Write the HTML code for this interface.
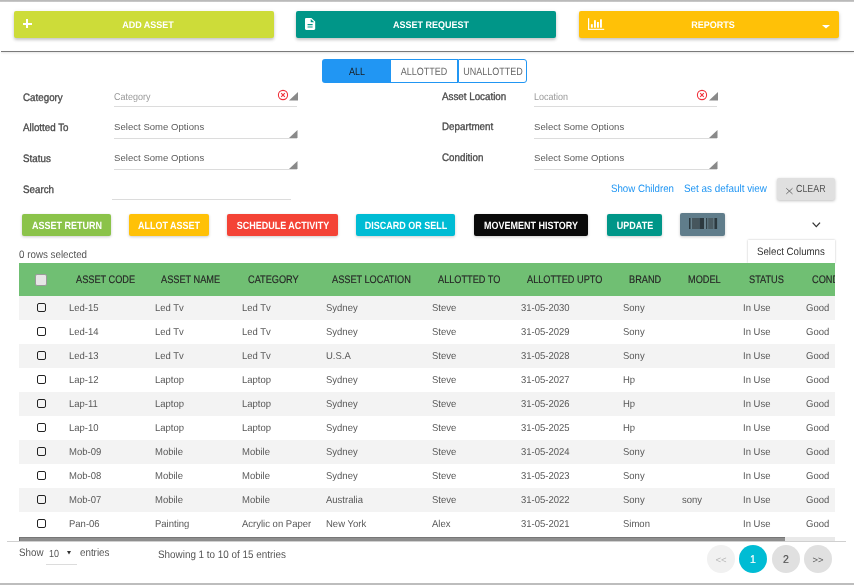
<!DOCTYPE html><html><head><meta charset="utf-8"><style>
*{margin:0;padding:0;box-sizing:border-box}
html,body{width:854px;height:585px;overflow:hidden;background:#fff;position:relative}
body{font-family:"Liberation Sans",sans-serif}
.t{position:absolute;white-space:nowrap;text-rendering:geometricPrecision;will-change:transform}
.r{position:absolute}
svg{position:absolute;overflow:visible}
</style></head><body>
<div class="r" style="left:0px;top:0px;width:854px;height:2px;background:linear-gradient(#bababa 0,#bababa 1.3px,#e6e6e6 2px);"></div>
<div class="r" style="left:14px;top:11px;width:260px;height:27px;background:#cddc39;border-radius:2px;box-shadow:0 2px 3px rgba(0,0,0,0.18),0 1px 5px rgba(0,0,0,0.08)"></div>
<div class="r" style="left:296px;top:11px;width:260px;height:27px;background:#009688;border-radius:2px;box-shadow:0 2px 3px rgba(0,0,0,0.18),0 1px 5px rgba(0,0,0,0.08)"></div>
<div class="r" style="left:579px;top:11px;width:260px;height:27px;background:#ffc107;border-radius:2px;box-shadow:0 2px 3px rgba(0,0,0,0.18),0 1px 5px rgba(0,0,0,0.08)"></div>
<div class="t" style="left:-52.40px;width:400px;text-align:center;top:20.58px;font-size:9px;line-height:9px;color:#fff;font-weight:700;transform:scaleY(1.07);transform-origin:0 7.62px;">ADD ASSET</div>
<div class="t" style="left:230.90px;width:400px;text-align:center;top:20.58px;font-size:9px;line-height:9px;color:#fff;font-weight:700;transform:scaleY(1.07);transform-origin:0 7.62px;">ASSET REQUEST</div>
<div class="t" style="left:513.00px;width:400px;text-align:center;top:20.58px;font-size:9px;line-height:9px;color:#fff;font-weight:700;transform:scaleY(1.07);transform-origin:0 7.62px;">REPORTS</div>
<div class="r" style="left:22.5px;top:22.8px;width:9.3px;height:2px;background:#fff;"></div>
<div class="r" style="left:26px;top:19.3px;width:2px;height:8.7px;background:#fff;"></div>
<svg style="left:305px;top:17.9px" width="10.2" height="12" viewBox="4 2 16 20" preserveAspectRatio="none"><path d="M14 2H6c-1.1 0-1.99.9-1.99 2L4 20c0 1.1.89 2 1.99 2H18c1.1 0 2-.9 2-2V8l-6-6zm2 16H8v-2h8v2zm0-4H8v-2h8v2zm-3-5V3.5L18.5 9H13z" fill="#fff" transform="translate(12 12) scale(1) translate(-12 -12)"/></svg>
<svg style="left:588px;top:18px" width="17" height="13" viewBox="0 0 17 13"><rect x="0" y="0.2" width="1.2" height="11.6" fill="#fff"/><rect x="0" y="10.8" width="16.2" height="1.1" fill="#fff"/><rect x="2.9" y="6.2" width="1.9" height="3.5" fill="#fff"/><rect x="6" y="2.2" width="1.9" height="7.5" fill="#fff"/><rect x="9" y="4" width="1.9" height="5.7" fill="#fff"/><rect x="12" y="1.3" width="1.9" height="8.4" fill="#fff"/></svg>
<svg style="left:822px;top:24.8px" width="8" height="4" viewBox="0 0 8 4"><path d="M0 0H8L4 3.6z" fill="#fff"/></svg>
<div class="r" style="left:1px;top:51px;width:853px;height:1px;background:#7a7a7a;box-shadow:0 1px 2px rgba(0,0,0,0.15)"></div>
<div class="r" style="left:322px;top:59px;width:69px;height:24px;background:#2196f3;border-radius:3px 0 0 3px"></div>
<div class="r" style="left:391px;top:59px;width:67px;height:24px;background:#fff;border:1px solid #2196f3;border-left:none"></div>
<div class="r" style="left:458px;top:59px;width:69px;height:24px;background:#fff;border:1px solid #2196f3;border-radius:0 3px 3px 0"></div>
<div class="t" style="left:157.00px;width:400px;text-align:center;top:68.18px;font-size:9px;line-height:9px;color:#1a1a1a;font-weight:400;transform:scaleY(1.18);transform-origin:0 7.62px;">ALL</div>
<div class="t" style="left:224.30px;width:400px;text-align:center;top:68.18px;font-size:9px;line-height:9px;color:#666;font-weight:400;transform:scaleY(1.18);transform-origin:0 7.62px;">ALLOTTED</div>
<div class="t" style="left:292.60px;width:400px;text-align:center;top:68.18px;font-size:9px;line-height:9px;color:#666;font-weight:400;transform:scaleY(1.18);transform-origin:0 7.62px;">UNALLOTTED</div>
<div class="t" style="left:22.50px;top:93.50px;font-size:9.8px;line-height:9.8px;color:#4a4a4a;font-weight:400;transform:scaleY(1.1);transform-origin:0 8.30px;-webkit-text-stroke:0.3px #4a4a4a">Category</div>
<div class="t" style="left:22.50px;top:123.50px;font-size:9.8px;line-height:9.8px;color:#4a4a4a;font-weight:400;transform:scaleY(1.1);transform-origin:0 8.30px;-webkit-text-stroke:0.3px #4a4a4a">Allotted To</div>
<div class="t" style="left:22.50px;top:154.60px;font-size:9.8px;line-height:9.8px;color:#4a4a4a;font-weight:400;transform:scaleY(1.1);transform-origin:0 8.30px;-webkit-text-stroke:0.3px #4a4a4a">Status</div>
<div class="t" style="left:22.50px;top:186.30px;font-size:9.8px;line-height:9.8px;color:#4a4a4a;font-weight:400;transform:scaleY(1.1);transform-origin:0 8.30px;-webkit-text-stroke:0.3px #4a4a4a">Search</div>
<div class="t" style="left:442.00px;top:92.90px;font-size:9.8px;line-height:9.8px;color:#4a4a4a;font-weight:400;transform:scaleY(1.1);transform-origin:0 8.30px;-webkit-text-stroke:0.3px #4a4a4a">Asset Location</div>
<div class="t" style="left:442.00px;top:122.90px;font-size:9.8px;line-height:9.8px;color:#4a4a4a;font-weight:400;transform:scaleY(1.1);transform-origin:0 8.30px;-webkit-text-stroke:0.3px #4a4a4a">Department</div>
<div class="t" style="left:442.00px;top:154.00px;font-size:9.8px;line-height:9.8px;color:#4a4a4a;font-weight:400;transform:scaleY(1.1);transform-origin:0 8.30px;-webkit-text-stroke:0.3px #4a4a4a">Condition</div>
<div class="r" style="left:114px;top:106px;width:183px;height:1px;background:#dcdcdc;"></div>
<div class="r" style="left:114px;top:138px;width:183px;height:1px;background:#dcdcdc;"></div>
<div class="r" style="left:114px;top:169px;width:183px;height:1px;background:#dcdcdc;"></div>
<svg style="left:277.3px;top:88.5px" width="12" height="12" viewBox="0 0 12 12"><circle cx="6" cy="6" r="4.6" fill="none" stroke="#f0303a" stroke-width="1.1"/><path d="M4.2 4.2L7.8 7.8M7.8 4.2L4.2 7.8" stroke="#f0303a" stroke-width="1.1"/></svg>
<svg style="left:289.3px;top:92.2px" width="9" height="8.5" viewBox="0 0 9 8.5"><path d="M9 0V8.5H0z" fill="#8a8a8a"/></svg>
<svg style="left:289.3px;top:130.4px" width="8.5" height="8" viewBox="0 0 8.5 8"><path d="M8.5 0V8H0z" fill="#8a8a8a"/></svg>
<svg style="left:289.3px;top:161.3px" width="8.5" height="8" viewBox="0 0 8.5 8"><path d="M8.5 0V8H0z" fill="#8a8a8a"/></svg>
<div class="r" style="left:533.5px;top:106px;width:183px;height:1px;background:#dcdcdc;"></div>
<div class="r" style="left:533.5px;top:138px;width:183px;height:1px;background:#dcdcdc;"></div>
<div class="r" style="left:533.5px;top:169px;width:183px;height:1px;background:#dcdcdc;"></div>
<svg style="left:696.3px;top:88.5px" width="12" height="12" viewBox="0 0 12 12"><circle cx="6" cy="6" r="4.6" fill="none" stroke="#f0303a" stroke-width="1.1"/><path d="M4.2 4.2L7.8 7.8M7.8 4.2L4.2 7.8" stroke="#f0303a" stroke-width="1.1"/></svg>
<svg style="left:708.5px;top:92.2px" width="9" height="8.5" viewBox="0 0 9 8.5"><path d="M9 0V8.5H0z" fill="#8a8a8a"/></svg>
<svg style="left:708.5px;top:130.4px" width="8.5" height="8" viewBox="0 0 8.5 8"><path d="M8.5 0V8H0z" fill="#8a8a8a"/></svg>
<svg style="left:708.5px;top:161.3px" width="8.5" height="8" viewBox="0 0 8.5 8"><path d="M8.5 0V8H0z" fill="#8a8a8a"/></svg>
<div class="t" style="left:114.20px;top:93.38px;font-size:9px;line-height:9px;color:#9a9a9a;font-weight:400;transform:scaleY(1.1);transform-origin:0 7.62px;">Category</div>
<div class="t" style="left:533.70px;top:93.38px;font-size:9px;line-height:9px;color:#9a9a9a;font-weight:400;transform:scaleY(1.1);transform-origin:0 7.62px;">Location</div>
<div class="t" style="left:114.40px;top:122.36px;font-size:9.5px;line-height:9.5px;color:#5a5a5a;font-weight:400;letter-spacing:0.05px;text-rendering:auto">Select Some Options</div>
<div class="t" style="left:114.40px;top:153.16px;font-size:9.5px;line-height:9.5px;color:#5a5a5a;font-weight:400;letter-spacing:0.05px;text-rendering:auto">Select Some Options</div>
<div class="t" style="left:533.50px;top:122.36px;font-size:9.5px;line-height:9.5px;color:#5a5a5a;font-weight:400;letter-spacing:0.05px;text-rendering:auto">Select Some Options</div>
<div class="t" style="left:533.50px;top:153.16px;font-size:9.5px;line-height:9.5px;color:#5a5a5a;font-weight:400;letter-spacing:0.05px;text-rendering:auto">Select Some Options</div>
<div class="r" style="left:111.5px;top:199px;width:179px;height:1px;background:#dcdcdc;"></div>
<div class="t" style="left:611.00px;top:185.09px;font-size:9.7px;line-height:9.7px;color:#2196f3;font-weight:400;transform:scaleY(1.1);transform-origin:0 8.21px;">Show Children</div>
<div class="t" style="left:684.00px;top:184.92px;font-size:9.9px;line-height:9.9px;color:#2196f3;font-weight:400;transform:scaleY(1.1);transform-origin:0 8.38px;">Set as default view</div>
<div class="r" style="left:777px;top:178px;width:58px;height:22px;background:#e0e0e0;border-radius:2px;box-shadow:0 1px 3px rgba(0,0,0,0.25)"></div>
<svg style="left:785.6px;top:187.8px" width="7" height="6.2" viewBox="0 0 7 6.2"><path d="M0.3 0.3L6.5 5.9M6.5 0.3L0.3 5.9" stroke="#666" stroke-width="0.9"/></svg>
<div class="t" style="left:796.00px;top:184.97px;font-size:8.9px;line-height:8.9px;color:#555;font-weight:400;transform:scaleY(1.15);transform-origin:0 7.53px;">CLEAR</div>
<div class="r" style="left:22px;top:214px;width:89px;height:22px;background:#8bc34a;border-radius:2px;box-shadow:0 1px 3px rgba(0,0,0,0.2)"></div>
<div class="t" style="left:-133.50px;width:400px;text-align:center;top:221.88px;font-size:9px;line-height:9px;color:#fff;font-weight:700;transform:scaleY(1.17);transform-origin:0 7.62px;">ASSET RETURN</div>
<div class="r" style="left:129px;top:214px;width:80px;height:22px;background:#ffc107;border-radius:2px;box-shadow:0 1px 3px rgba(0,0,0,0.2)"></div>
<div class="t" style="left:-31.00px;width:400px;text-align:center;top:221.88px;font-size:9px;line-height:9px;color:#fff;font-weight:700;transform:scaleY(1.17);transform-origin:0 7.62px;">ALLOT ASSET</div>
<div class="r" style="left:227px;top:214px;width:111px;height:22px;background:#f44336;border-radius:2px;box-shadow:0 1px 3px rgba(0,0,0,0.2)"></div>
<div class="t" style="left:82.50px;width:400px;text-align:center;top:221.88px;font-size:9px;line-height:9px;color:#fff;font-weight:700;transform:scaleY(1.17);transform-origin:0 7.62px;">SCHEDULE ACTIVITY</div>
<div class="r" style="left:356px;top:214px;width:99px;height:22px;background:#00bcd4;border-radius:2px;box-shadow:0 1px 3px rgba(0,0,0,0.2)"></div>
<div class="t" style="left:205.50px;width:400px;text-align:center;top:221.88px;font-size:9px;line-height:9px;color:#fff;font-weight:700;transform:scaleY(1.17);transform-origin:0 7.62px;">DISCARD OR SELL</div>
<div class="r" style="left:474px;top:214px;width:114px;height:22px;background:#0a0a0a;border-radius:2px;box-shadow:0 1px 3px rgba(0,0,0,0.2)"></div>
<div class="t" style="left:331.00px;width:400px;text-align:center;top:221.88px;font-size:9px;line-height:9px;color:#fff;font-weight:700;transform:scaleY(1.17);transform-origin:0 7.62px;">MOVEMENT HISTORY</div>
<div class="r" style="left:607px;top:214px;width:55px;height:22px;background:#009688;border-radius:2px;box-shadow:0 1px 3px rgba(0,0,0,0.2)"></div>
<div class="t" style="left:434.50px;width:400px;text-align:center;top:221.88px;font-size:9px;line-height:9px;color:#fff;font-weight:700;transform:scaleY(1.17);transform-origin:0 7.62px;">UPDATE</div>
<div class="r" style="left:680px;top:213px;width:45px;height:23px;background:#607d8b;border-radius:2px;box-shadow:0 1px 3px rgba(0,0,0,0.2)"></div>
<svg style="left:689px;top:218px" width="28" height="11" viewBox="0 0 28 11"><rect x="0" y="0" width="1.70" height="11" fill="#2a373d"/><rect x="1.7" y="0" width="1.30" height="11" fill="#6a848f"/><rect x="3" y="0" width="7.70" height="11" fill="#46565d"/><rect x="10.7" y="0" width="4.30" height="11" fill="#2c393f"/><rect x="15" y="0" width="2.10" height="11" fill="#6a848f"/><rect x="17.1" y="0" width="1.40" height="11" fill="#2f3c42"/><rect x="18.5" y="0" width="0.70" height="11" fill="#6a848f"/><rect x="19.2" y="0" width="4.90" height="11" fill="#4b5c63"/><rect x="24.1" y="0" width="1.40" height="11" fill="#5f737b"/><rect x="25.5" y="0" width="2.60" height="11" fill="#2c393f"/></svg>
<svg style="left:812px;top:221.5px" width="9" height="6" viewBox="0 0 9 6"><path d="M0.6 0.6L4.3 4.6L8 0.6" fill="none" stroke="#333" stroke-width="1.3"/></svg>
<div class="t" style="left:19.00px;top:251.40px;font-size:9.8px;line-height:9.8px;color:#555;font-weight:400;transform:scaleY(1.1);transform-origin:0 8.30px;">0 rows selected</div>
<div class="r" style="left:748px;top:240px;width:87px;height:23px;background:#fff;box-shadow:0 0 2px rgba(0,0,0,0.25)"></div>
<div class="t" style="left:757.00px;top:248.49px;font-size:9.7px;line-height:9.7px;color:#333;font-weight:400;transform:scaleY(1.1);transform-origin:0 8.21px;">Select Columns</div>
<div class="r" style="left:19px;top:263px;width:816px;height:33px;background:#70bf73;"></div>
<div class="r" style="left:35px;top:274px;width:12px;height:12px;background:#e6e6e6;border:1px solid #9a9a9a;border-radius:2px"></div>
<div class="r" style="left:19px;top:263px;width:816px;height:33px;overflow:hidden"><div class="t" style="left:57px;top:12.61px;font-size:9.2px;line-height:9.2px;color:#262626;-webkit-text-stroke:0.15px #262626;transform:scaleY(1.18);transform-origin:0 7.79px">ASSET CODE</div><div class="t" style="left:142px;top:12.61px;font-size:9.2px;line-height:9.2px;color:#262626;-webkit-text-stroke:0.15px #262626;transform:scaleY(1.18);transform-origin:0 7.79px">ASSET NAME</div><div class="t" style="left:228.6px;top:12.61px;font-size:9.2px;line-height:9.2px;color:#262626;-webkit-text-stroke:0.15px #262626;transform:scaleY(1.18);transform-origin:0 7.79px">CATEGORY</div><div class="t" style="left:312.6px;top:12.61px;font-size:9.2px;line-height:9.2px;color:#262626;-webkit-text-stroke:0.15px #262626;transform:scaleY(1.18);transform-origin:0 7.79px">ASSET LOCATION</div><div class="t" style="left:418.6px;top:12.61px;font-size:9.2px;line-height:9.2px;color:#262626;-webkit-text-stroke:0.15px #262626;transform:scaleY(1.18);transform-origin:0 7.79px">ALLOTTED TO</div><div class="t" style="left:507.79999999999995px;top:12.61px;font-size:9.2px;line-height:9.2px;color:#262626;-webkit-text-stroke:0.15px #262626;transform:scaleY(1.18);transform-origin:0 7.79px">ALLOTTED UPTO</div><div class="t" style="left:609.5px;top:12.61px;font-size:9.2px;line-height:9.2px;color:#262626;-webkit-text-stroke:0.15px #262626;transform:scaleY(1.18);transform-origin:0 7.79px">BRAND</div><div class="t" style="left:669.3px;top:12.61px;font-size:9.2px;line-height:9.2px;color:#262626;-webkit-text-stroke:0.15px #262626;transform:scaleY(1.18);transform-origin:0 7.79px">MODEL</div><div class="t" style="left:729.6px;top:12.61px;font-size:9.2px;line-height:9.2px;color:#262626;-webkit-text-stroke:0.15px #262626;transform:scaleY(1.18);transform-origin:0 7.79px">STATUS</div><div class="t" style="left:792.5px;top:12.61px;font-size:9.2px;line-height:9.2px;color:#262626;-webkit-text-stroke:0.15px #262626;transform:scaleY(1.18);transform-origin:0 7.79px">CONDITION</div></div>
<div class="r" style="left:19px;top:296px;width:816px;height:24px;background:#f3f3f3;"></div>
<div class="r" style="left:36.8px;top:303.2px;width:9.6px;height:9.2px;background:transparent;border:1.4px solid #222;border-radius:2px"></div>
<div class="t" style="left:69.10px;top:303.96px;font-size:9.5px;line-height:9.5px;color:#585858;font-weight:400;transform:scaleY(1.05);transform-origin:0 8.04px;">Led-15</div>
<div class="t" style="left:154.50px;top:303.96px;font-size:9.5px;line-height:9.5px;color:#585858;font-weight:400;transform:scaleY(1.05);transform-origin:0 8.04px;">Led Tv</div>
<div class="t" style="left:241.60px;top:303.96px;font-size:9.5px;line-height:9.5px;color:#585858;font-weight:400;transform:scaleY(1.05);transform-origin:0 8.04px;">Led Tv</div>
<div class="t" style="left:325.60px;top:303.96px;font-size:9.5px;line-height:9.5px;color:#585858;font-weight:400;transform:scaleY(1.05);transform-origin:0 8.04px;">Sydney</div>
<div class="t" style="left:431.80px;top:303.96px;font-size:9.5px;line-height:9.5px;color:#585858;font-weight:400;transform:scaleY(1.05);transform-origin:0 8.04px;">Steve</div>
<div class="t" style="left:520.70px;top:303.96px;font-size:9.5px;line-height:9.5px;color:#585858;font-weight:400;transform:scaleY(1.05);transform-origin:0 8.04px;">31-05-2030</div>
<div class="t" style="left:622.70px;top:303.96px;font-size:9.5px;line-height:9.5px;color:#585858;font-weight:400;transform:scaleY(1.05);transform-origin:0 8.04px;">Sony</div>
<div class="t" style="left:742.50px;top:303.96px;font-size:9.5px;line-height:9.5px;color:#585858;font-weight:400;transform:scaleY(1.05);transform-origin:0 8.04px;">In Use</div>
<div class="t" style="left:806.00px;top:303.96px;font-size:9.5px;line-height:9.5px;color:#585858;font-weight:400;transform:scaleY(1.05);transform-origin:0 8.04px;">Good</div>
<div class="r" style="left:19px;top:320px;width:816px;height:24px;background:#fff;"></div>
<div class="r" style="left:36.8px;top:327.2px;width:9.6px;height:9.2px;background:transparent;border:1.4px solid #222;border-radius:2px"></div>
<div class="t" style="left:69.10px;top:327.96px;font-size:9.5px;line-height:9.5px;color:#585858;font-weight:400;transform:scaleY(1.05);transform-origin:0 8.04px;">Led-14</div>
<div class="t" style="left:154.50px;top:327.96px;font-size:9.5px;line-height:9.5px;color:#585858;font-weight:400;transform:scaleY(1.05);transform-origin:0 8.04px;">Led Tv</div>
<div class="t" style="left:241.60px;top:327.96px;font-size:9.5px;line-height:9.5px;color:#585858;font-weight:400;transform:scaleY(1.05);transform-origin:0 8.04px;">Led Tv</div>
<div class="t" style="left:325.60px;top:327.96px;font-size:9.5px;line-height:9.5px;color:#585858;font-weight:400;transform:scaleY(1.05);transform-origin:0 8.04px;">Sydney</div>
<div class="t" style="left:431.80px;top:327.96px;font-size:9.5px;line-height:9.5px;color:#585858;font-weight:400;transform:scaleY(1.05);transform-origin:0 8.04px;">Steve</div>
<div class="t" style="left:520.70px;top:327.96px;font-size:9.5px;line-height:9.5px;color:#585858;font-weight:400;transform:scaleY(1.05);transform-origin:0 8.04px;">31-05-2029</div>
<div class="t" style="left:622.70px;top:327.96px;font-size:9.5px;line-height:9.5px;color:#585858;font-weight:400;transform:scaleY(1.05);transform-origin:0 8.04px;">Sony</div>
<div class="t" style="left:742.50px;top:327.96px;font-size:9.5px;line-height:9.5px;color:#585858;font-weight:400;transform:scaleY(1.05);transform-origin:0 8.04px;">In Use</div>
<div class="t" style="left:806.00px;top:327.96px;font-size:9.5px;line-height:9.5px;color:#585858;font-weight:400;transform:scaleY(1.05);transform-origin:0 8.04px;">Good</div>
<div class="r" style="left:19px;top:344px;width:816px;height:24px;background:#f3f3f3;"></div>
<div class="r" style="left:36.8px;top:351.2px;width:9.6px;height:9.2px;background:transparent;border:1.4px solid #222;border-radius:2px"></div>
<div class="t" style="left:69.10px;top:351.96px;font-size:9.5px;line-height:9.5px;color:#585858;font-weight:400;transform:scaleY(1.05);transform-origin:0 8.04px;">Led-13</div>
<div class="t" style="left:154.50px;top:351.96px;font-size:9.5px;line-height:9.5px;color:#585858;font-weight:400;transform:scaleY(1.05);transform-origin:0 8.04px;">Led Tv</div>
<div class="t" style="left:241.60px;top:351.96px;font-size:9.5px;line-height:9.5px;color:#585858;font-weight:400;transform:scaleY(1.05);transform-origin:0 8.04px;">Led Tv</div>
<div class="t" style="left:325.60px;top:351.96px;font-size:9.5px;line-height:9.5px;color:#585858;font-weight:400;transform:scaleY(1.05);transform-origin:0 8.04px;">U.S.A</div>
<div class="t" style="left:431.80px;top:351.96px;font-size:9.5px;line-height:9.5px;color:#585858;font-weight:400;transform:scaleY(1.05);transform-origin:0 8.04px;">Steve</div>
<div class="t" style="left:520.70px;top:351.96px;font-size:9.5px;line-height:9.5px;color:#585858;font-weight:400;transform:scaleY(1.05);transform-origin:0 8.04px;">31-05-2028</div>
<div class="t" style="left:622.70px;top:351.96px;font-size:9.5px;line-height:9.5px;color:#585858;font-weight:400;transform:scaleY(1.05);transform-origin:0 8.04px;">Sony</div>
<div class="t" style="left:742.50px;top:351.96px;font-size:9.5px;line-height:9.5px;color:#585858;font-weight:400;transform:scaleY(1.05);transform-origin:0 8.04px;">In Use</div>
<div class="t" style="left:806.00px;top:351.96px;font-size:9.5px;line-height:9.5px;color:#585858;font-weight:400;transform:scaleY(1.05);transform-origin:0 8.04px;">Good</div>
<div class="r" style="left:19px;top:368px;width:816px;height:24px;background:#fff;"></div>
<div class="r" style="left:36.8px;top:375.2px;width:9.6px;height:9.2px;background:transparent;border:1.4px solid #222;border-radius:2px"></div>
<div class="t" style="left:69.10px;top:375.96px;font-size:9.5px;line-height:9.5px;color:#585858;font-weight:400;transform:scaleY(1.05);transform-origin:0 8.04px;">Lap-12</div>
<div class="t" style="left:154.50px;top:375.96px;font-size:9.5px;line-height:9.5px;color:#585858;font-weight:400;transform:scaleY(1.05);transform-origin:0 8.04px;">Laptop</div>
<div class="t" style="left:241.60px;top:375.96px;font-size:9.5px;line-height:9.5px;color:#585858;font-weight:400;transform:scaleY(1.05);transform-origin:0 8.04px;">Laptop</div>
<div class="t" style="left:325.60px;top:375.96px;font-size:9.5px;line-height:9.5px;color:#585858;font-weight:400;transform:scaleY(1.05);transform-origin:0 8.04px;">Sydney</div>
<div class="t" style="left:431.80px;top:375.96px;font-size:9.5px;line-height:9.5px;color:#585858;font-weight:400;transform:scaleY(1.05);transform-origin:0 8.04px;">Steve</div>
<div class="t" style="left:520.70px;top:375.96px;font-size:9.5px;line-height:9.5px;color:#585858;font-weight:400;transform:scaleY(1.05);transform-origin:0 8.04px;">31-05-2027</div>
<div class="t" style="left:622.70px;top:375.96px;font-size:9.5px;line-height:9.5px;color:#585858;font-weight:400;transform:scaleY(1.05);transform-origin:0 8.04px;">Hp</div>
<div class="t" style="left:742.50px;top:375.96px;font-size:9.5px;line-height:9.5px;color:#585858;font-weight:400;transform:scaleY(1.05);transform-origin:0 8.04px;">In Use</div>
<div class="t" style="left:806.00px;top:375.96px;font-size:9.5px;line-height:9.5px;color:#585858;font-weight:400;transform:scaleY(1.05);transform-origin:0 8.04px;">Good</div>
<div class="r" style="left:19px;top:392px;width:816px;height:24px;background:#f3f3f3;"></div>
<div class="r" style="left:36.8px;top:399.2px;width:9.6px;height:9.2px;background:transparent;border:1.4px solid #222;border-radius:2px"></div>
<div class="t" style="left:69.10px;top:399.96px;font-size:9.5px;line-height:9.5px;color:#585858;font-weight:400;transform:scaleY(1.05);transform-origin:0 8.04px;">Lap-11</div>
<div class="t" style="left:154.50px;top:399.96px;font-size:9.5px;line-height:9.5px;color:#585858;font-weight:400;transform:scaleY(1.05);transform-origin:0 8.04px;">Laptop</div>
<div class="t" style="left:241.60px;top:399.96px;font-size:9.5px;line-height:9.5px;color:#585858;font-weight:400;transform:scaleY(1.05);transform-origin:0 8.04px;">Laptop</div>
<div class="t" style="left:325.60px;top:399.96px;font-size:9.5px;line-height:9.5px;color:#585858;font-weight:400;transform:scaleY(1.05);transform-origin:0 8.04px;">Sydney</div>
<div class="t" style="left:431.80px;top:399.96px;font-size:9.5px;line-height:9.5px;color:#585858;font-weight:400;transform:scaleY(1.05);transform-origin:0 8.04px;">Steve</div>
<div class="t" style="left:520.70px;top:399.96px;font-size:9.5px;line-height:9.5px;color:#585858;font-weight:400;transform:scaleY(1.05);transform-origin:0 8.04px;">31-05-2026</div>
<div class="t" style="left:622.70px;top:399.96px;font-size:9.5px;line-height:9.5px;color:#585858;font-weight:400;transform:scaleY(1.05);transform-origin:0 8.04px;">Hp</div>
<div class="t" style="left:742.50px;top:399.96px;font-size:9.5px;line-height:9.5px;color:#585858;font-weight:400;transform:scaleY(1.05);transform-origin:0 8.04px;">In Use</div>
<div class="t" style="left:806.00px;top:399.96px;font-size:9.5px;line-height:9.5px;color:#585858;font-weight:400;transform:scaleY(1.05);transform-origin:0 8.04px;">Good</div>
<div class="r" style="left:19px;top:416px;width:816px;height:24px;background:#fff;"></div>
<div class="r" style="left:36.8px;top:423.2px;width:9.6px;height:9.2px;background:transparent;border:1.4px solid #222;border-radius:2px"></div>
<div class="t" style="left:69.10px;top:423.96px;font-size:9.5px;line-height:9.5px;color:#585858;font-weight:400;transform:scaleY(1.05);transform-origin:0 8.04px;">Lap-10</div>
<div class="t" style="left:154.50px;top:423.96px;font-size:9.5px;line-height:9.5px;color:#585858;font-weight:400;transform:scaleY(1.05);transform-origin:0 8.04px;">Laptop</div>
<div class="t" style="left:241.60px;top:423.96px;font-size:9.5px;line-height:9.5px;color:#585858;font-weight:400;transform:scaleY(1.05);transform-origin:0 8.04px;">Laptop</div>
<div class="t" style="left:325.60px;top:423.96px;font-size:9.5px;line-height:9.5px;color:#585858;font-weight:400;transform:scaleY(1.05);transform-origin:0 8.04px;">Sydney</div>
<div class="t" style="left:431.80px;top:423.96px;font-size:9.5px;line-height:9.5px;color:#585858;font-weight:400;transform:scaleY(1.05);transform-origin:0 8.04px;">Steve</div>
<div class="t" style="left:520.70px;top:423.96px;font-size:9.5px;line-height:9.5px;color:#585858;font-weight:400;transform:scaleY(1.05);transform-origin:0 8.04px;">31-05-2025</div>
<div class="t" style="left:622.70px;top:423.96px;font-size:9.5px;line-height:9.5px;color:#585858;font-weight:400;transform:scaleY(1.05);transform-origin:0 8.04px;">Hp</div>
<div class="t" style="left:742.50px;top:423.96px;font-size:9.5px;line-height:9.5px;color:#585858;font-weight:400;transform:scaleY(1.05);transform-origin:0 8.04px;">In Use</div>
<div class="t" style="left:806.00px;top:423.96px;font-size:9.5px;line-height:9.5px;color:#585858;font-weight:400;transform:scaleY(1.05);transform-origin:0 8.04px;">Good</div>
<div class="r" style="left:19px;top:440px;width:816px;height:24px;background:#f3f3f3;"></div>
<div class="r" style="left:36.8px;top:447.2px;width:9.6px;height:9.2px;background:transparent;border:1.4px solid #222;border-radius:2px"></div>
<div class="t" style="left:69.10px;top:447.96px;font-size:9.5px;line-height:9.5px;color:#585858;font-weight:400;transform:scaleY(1.05);transform-origin:0 8.04px;">Mob-09</div>
<div class="t" style="left:154.50px;top:447.96px;font-size:9.5px;line-height:9.5px;color:#585858;font-weight:400;transform:scaleY(1.05);transform-origin:0 8.04px;">Mobile</div>
<div class="t" style="left:241.60px;top:447.96px;font-size:9.5px;line-height:9.5px;color:#585858;font-weight:400;transform:scaleY(1.05);transform-origin:0 8.04px;">Mobile</div>
<div class="t" style="left:325.60px;top:447.96px;font-size:9.5px;line-height:9.5px;color:#585858;font-weight:400;transform:scaleY(1.05);transform-origin:0 8.04px;">Sydney</div>
<div class="t" style="left:431.80px;top:447.96px;font-size:9.5px;line-height:9.5px;color:#585858;font-weight:400;transform:scaleY(1.05);transform-origin:0 8.04px;">Steve</div>
<div class="t" style="left:520.70px;top:447.96px;font-size:9.5px;line-height:9.5px;color:#585858;font-weight:400;transform:scaleY(1.05);transform-origin:0 8.04px;">31-05-2024</div>
<div class="t" style="left:622.70px;top:447.96px;font-size:9.5px;line-height:9.5px;color:#585858;font-weight:400;transform:scaleY(1.05);transform-origin:0 8.04px;">Sony</div>
<div class="t" style="left:742.50px;top:447.96px;font-size:9.5px;line-height:9.5px;color:#585858;font-weight:400;transform:scaleY(1.05);transform-origin:0 8.04px;">In Use</div>
<div class="t" style="left:806.00px;top:447.96px;font-size:9.5px;line-height:9.5px;color:#585858;font-weight:400;transform:scaleY(1.05);transform-origin:0 8.04px;">Good</div>
<div class="r" style="left:19px;top:464px;width:816px;height:24px;background:#fff;"></div>
<div class="r" style="left:36.8px;top:471.2px;width:9.6px;height:9.2px;background:transparent;border:1.4px solid #222;border-radius:2px"></div>
<div class="t" style="left:69.10px;top:471.96px;font-size:9.5px;line-height:9.5px;color:#585858;font-weight:400;transform:scaleY(1.05);transform-origin:0 8.04px;">Mob-08</div>
<div class="t" style="left:154.50px;top:471.96px;font-size:9.5px;line-height:9.5px;color:#585858;font-weight:400;transform:scaleY(1.05);transform-origin:0 8.04px;">Mobile</div>
<div class="t" style="left:241.60px;top:471.96px;font-size:9.5px;line-height:9.5px;color:#585858;font-weight:400;transform:scaleY(1.05);transform-origin:0 8.04px;">Mobile</div>
<div class="t" style="left:325.60px;top:471.96px;font-size:9.5px;line-height:9.5px;color:#585858;font-weight:400;transform:scaleY(1.05);transform-origin:0 8.04px;">Sydney</div>
<div class="t" style="left:431.80px;top:471.96px;font-size:9.5px;line-height:9.5px;color:#585858;font-weight:400;transform:scaleY(1.05);transform-origin:0 8.04px;">Steve</div>
<div class="t" style="left:520.70px;top:471.96px;font-size:9.5px;line-height:9.5px;color:#585858;font-weight:400;transform:scaleY(1.05);transform-origin:0 8.04px;">31-05-2023</div>
<div class="t" style="left:622.70px;top:471.96px;font-size:9.5px;line-height:9.5px;color:#585858;font-weight:400;transform:scaleY(1.05);transform-origin:0 8.04px;">Sony</div>
<div class="t" style="left:742.50px;top:471.96px;font-size:9.5px;line-height:9.5px;color:#585858;font-weight:400;transform:scaleY(1.05);transform-origin:0 8.04px;">In Use</div>
<div class="t" style="left:806.00px;top:471.96px;font-size:9.5px;line-height:9.5px;color:#585858;font-weight:400;transform:scaleY(1.05);transform-origin:0 8.04px;">Good</div>
<div class="r" style="left:19px;top:488px;width:816px;height:24px;background:#f3f3f3;"></div>
<div class="r" style="left:36.8px;top:495.2px;width:9.6px;height:9.2px;background:transparent;border:1.4px solid #222;border-radius:2px"></div>
<div class="t" style="left:69.10px;top:495.96px;font-size:9.5px;line-height:9.5px;color:#585858;font-weight:400;transform:scaleY(1.05);transform-origin:0 8.04px;">Mob-07</div>
<div class="t" style="left:154.50px;top:495.96px;font-size:9.5px;line-height:9.5px;color:#585858;font-weight:400;transform:scaleY(1.05);transform-origin:0 8.04px;">Mobile</div>
<div class="t" style="left:241.60px;top:495.96px;font-size:9.5px;line-height:9.5px;color:#585858;font-weight:400;transform:scaleY(1.05);transform-origin:0 8.04px;">Mobile</div>
<div class="t" style="left:325.60px;top:495.96px;font-size:9.5px;line-height:9.5px;color:#585858;font-weight:400;transform:scaleY(1.05);transform-origin:0 8.04px;">Australia</div>
<div class="t" style="left:431.80px;top:495.96px;font-size:9.5px;line-height:9.5px;color:#585858;font-weight:400;transform:scaleY(1.05);transform-origin:0 8.04px;">Steve</div>
<div class="t" style="left:520.70px;top:495.96px;font-size:9.5px;line-height:9.5px;color:#585858;font-weight:400;transform:scaleY(1.05);transform-origin:0 8.04px;">31-05-2022</div>
<div class="t" style="left:622.70px;top:495.96px;font-size:9.5px;line-height:9.5px;color:#585858;font-weight:400;transform:scaleY(1.05);transform-origin:0 8.04px;">Sony</div>
<div class="t" style="left:682.40px;top:495.96px;font-size:9.5px;line-height:9.5px;color:#585858;font-weight:400;transform:scaleY(1.05);transform-origin:0 8.04px;">sony</div>
<div class="t" style="left:742.50px;top:495.96px;font-size:9.5px;line-height:9.5px;color:#585858;font-weight:400;transform:scaleY(1.05);transform-origin:0 8.04px;">In Use</div>
<div class="t" style="left:806.00px;top:495.96px;font-size:9.5px;line-height:9.5px;color:#585858;font-weight:400;transform:scaleY(1.05);transform-origin:0 8.04px;">Good</div>
<div class="r" style="left:19px;top:512px;width:816px;height:24px;background:#fff;"></div>
<div class="r" style="left:36.8px;top:519.2px;width:9.6px;height:9.2px;background:transparent;border:1.4px solid #222;border-radius:2px"></div>
<div class="t" style="left:69.10px;top:519.96px;font-size:9.5px;line-height:9.5px;color:#585858;font-weight:400;transform:scaleY(1.05);transform-origin:0 8.04px;">Pan-06</div>
<div class="t" style="left:154.50px;top:519.96px;font-size:9.5px;line-height:9.5px;color:#585858;font-weight:400;transform:scaleY(1.05);transform-origin:0 8.04px;">Painting</div>
<div class="t" style="left:241.60px;top:519.96px;font-size:9.5px;line-height:9.5px;color:#585858;font-weight:400;transform:scaleY(1.05);transform-origin:0 8.04px;">Acrylic on Paper</div>
<div class="t" style="left:325.60px;top:519.96px;font-size:9.5px;line-height:9.5px;color:#585858;font-weight:400;transform:scaleY(1.05);transform-origin:0 8.04px;">New York</div>
<div class="t" style="left:431.80px;top:519.96px;font-size:9.5px;line-height:9.5px;color:#585858;font-weight:400;transform:scaleY(1.05);transform-origin:0 8.04px;">Alex</div>
<div class="t" style="left:520.70px;top:519.96px;font-size:9.5px;line-height:9.5px;color:#585858;font-weight:400;transform:scaleY(1.05);transform-origin:0 8.04px;">31-05-2021</div>
<div class="t" style="left:622.70px;top:519.96px;font-size:9.5px;line-height:9.5px;color:#585858;font-weight:400;transform:scaleY(1.05);transform-origin:0 8.04px;">Simon</div>
<div class="t" style="left:742.50px;top:519.96px;font-size:9.5px;line-height:9.5px;color:#585858;font-weight:400;transform:scaleY(1.05);transform-origin:0 8.04px;">In Use</div>
<div class="t" style="left:806.00px;top:519.96px;font-size:9.5px;line-height:9.5px;color:#585858;font-weight:400;transform:scaleY(1.05);transform-origin:0 8.04px;">Good</div>
<div class="r" style="left:19px;top:537px;width:816px;height:4px;background:#e9e9e9;"></div>
<div class="r" style="left:19px;top:537px;width:766px;height:4px;background:#8e8e8e;border-top:1px solid #767676;border-left:1px solid #6e6e6e"></div>
<div class="r" style="left:7px;top:541px;width:839px;height:1px;background:#d0d0d0;"></div>
<div class="t" style="left:18.70px;top:549.30px;font-size:9.8px;line-height:9.8px;color:#555;font-weight:400;transform:scaleY(1.1);transform-origin:0 8.30px;">Show</div>
<div class="t" style="left:49.00px;top:549.88px;font-size:9px;line-height:9px;color:#555;font-weight:400;transform:scaleY(1.15);transform-origin:0 7.62px;">10</div>
<svg style="left:67.4px;top:551.2px" width="4" height="3.5" viewBox="0 0 4 3.5"><path d="M0 0H4L2 3.5z" fill="#333"/></svg>
<div class="r" style="left:45.5px;top:564px;width:31px;height:1px;background:#dcdcdc;"></div>
<div class="t" style="left:80.20px;top:549.30px;font-size:9.8px;line-height:9.8px;color:#555;font-weight:400;transform:scaleY(1.1);transform-origin:0 8.30px;">entries</div>
<div class="t" style="left:158.00px;top:551.32px;font-size:9.9px;line-height:9.9px;color:#555;font-weight:400;transform:scaleY(1.1);transform-origin:0 8.38px;">Showing 1 to 10 of 15 entries</div>
<div class="r" style="left:707px;top:545px;width:28px;height:28px;background:#f1f1f1;border-radius:50%"></div>
<div class="t" style="left:521.00px;width:400px;text-align:center;top:556.16px;font-size:9.5px;line-height:9.5px;color:#b5b5b5;font-weight:400;">&lt;&lt;</div>
<div class="r" style="left:738.8px;top:545px;width:28px;height:28px;background:#00bcd4;border-radius:50%"></div>
<div class="t" style="left:552.80px;width:400px;text-align:center;top:554.71px;font-size:10.5px;line-height:10.5px;color:#fff;font-weight:400;transform:scaleY(1.08);transform-origin:0 8.89px;-webkit-text-stroke:0.2px #fff">1</div>
<div class="r" style="left:772px;top:545px;width:28px;height:28px;background:#e0e0e0;border-radius:50%"></div>
<div class="t" style="left:586.00px;width:400px;text-align:center;top:554.71px;font-size:10.5px;line-height:10.5px;color:#555;font-weight:400;transform:scaleY(1.08);transform-origin:0 8.89px;-webkit-text-stroke:0.2px #555">2</div>
<div class="r" style="left:804px;top:545px;width:28px;height:28px;background:#e0e0e0;border-radius:50%"></div>
<div class="t" style="left:618.00px;width:400px;text-align:center;top:556.16px;font-size:9.5px;line-height:9.5px;color:#555;font-weight:400;">&gt;&gt;</div>
<div class="r" style="left:0px;top:583px;width:854px;height:2px;background:#bdbdbd;"></div>
</body></html>
